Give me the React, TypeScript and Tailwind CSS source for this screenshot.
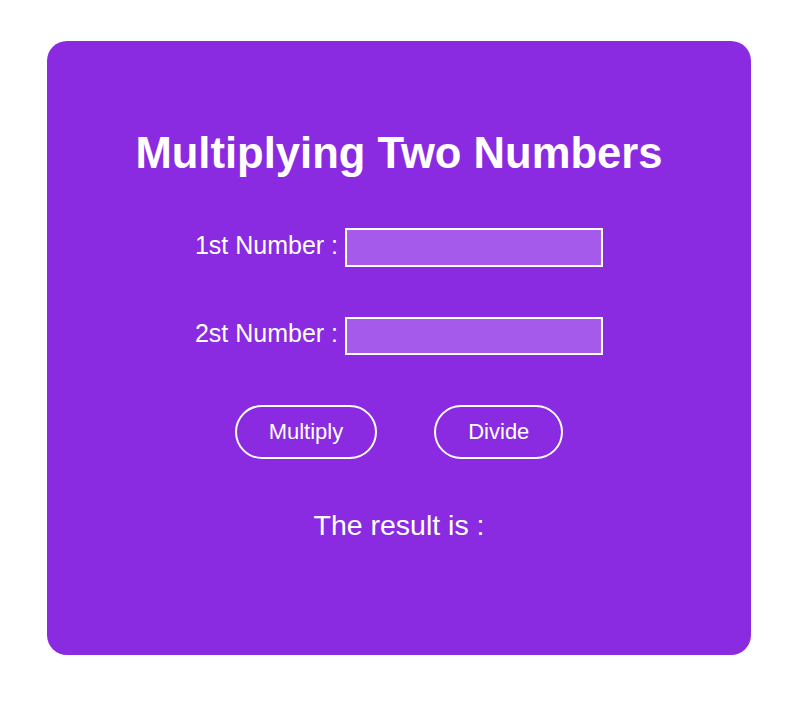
import { useState } from 'react';

export default function App() {
  const [first, setFirst] = useState('');
  const [second, setSecond] = useState('');
  const [result, setResult] = useState<string>('');

  const calc = (op: 'mul' | 'div') => {
    const a = parseFloat(first);
    const b = parseFloat(second);
    if (isNaN(a) || isNaN(b)) {
      setResult('');
      return;
    }
    setResult(String(op === 'mul' ? a * b : a / b));
  };

  return (
    <div className="min-h-screen bg-white pt-[41px] font-['Liberation_Sans',Arial,sans-serif] text-white">
      <div className="ml-[47px] flex h-[614px] w-[704px] flex-col items-center rounded-[20px] bg-[#8a2be2] pt-[87px]">
        <h1 className="text-[43.6px] font-bold leading-[50px]">Multiplying Two Numbers</h1>

        <div className="mt-[50px] flex items-center gap-[7px]">
          <label className="mb-[6px] text-[25px] leading-[28px]">1st Number :</label>
          <input
            value={first}
            onChange={(e) => setFirst(e.target.value)}
            className="h-[39px] w-[258px] border-2 border-white bg-[#a65aeb] px-2 text-white outline-none"
          />
        </div>

        <div className="mt-[50px] flex items-center gap-[7px]">
          <label className="mb-[6px] text-[25px] leading-[28px]">2st Number :</label>
          <input
            value={second}
            onChange={(e) => setSecond(e.target.value)}
            className="h-[38px] w-[258px] border-2 border-white bg-[#a65aeb] px-2 text-white outline-none"
          />
        </div>

        <div className="mt-[50px] flex gap-[57px]">
          <button
            onClick={() => calc('mul')}
            className="rounded-full border-2 border-white px-[32px] py-[12px] text-[22px] leading-[26px]"
          >
            Multiply
          </button>
          <button
            onClick={() => calc('div')}
            className="rounded-full border-2 border-white px-[32px] py-[12px] text-[22px] leading-[26px]"
          >
            Divide
          </button>
        </div>

        <p className="mt-[50px] text-[28.5px] leading-[32px]">The result is : {result}</p>
      </div>
    </div>
  );
}
